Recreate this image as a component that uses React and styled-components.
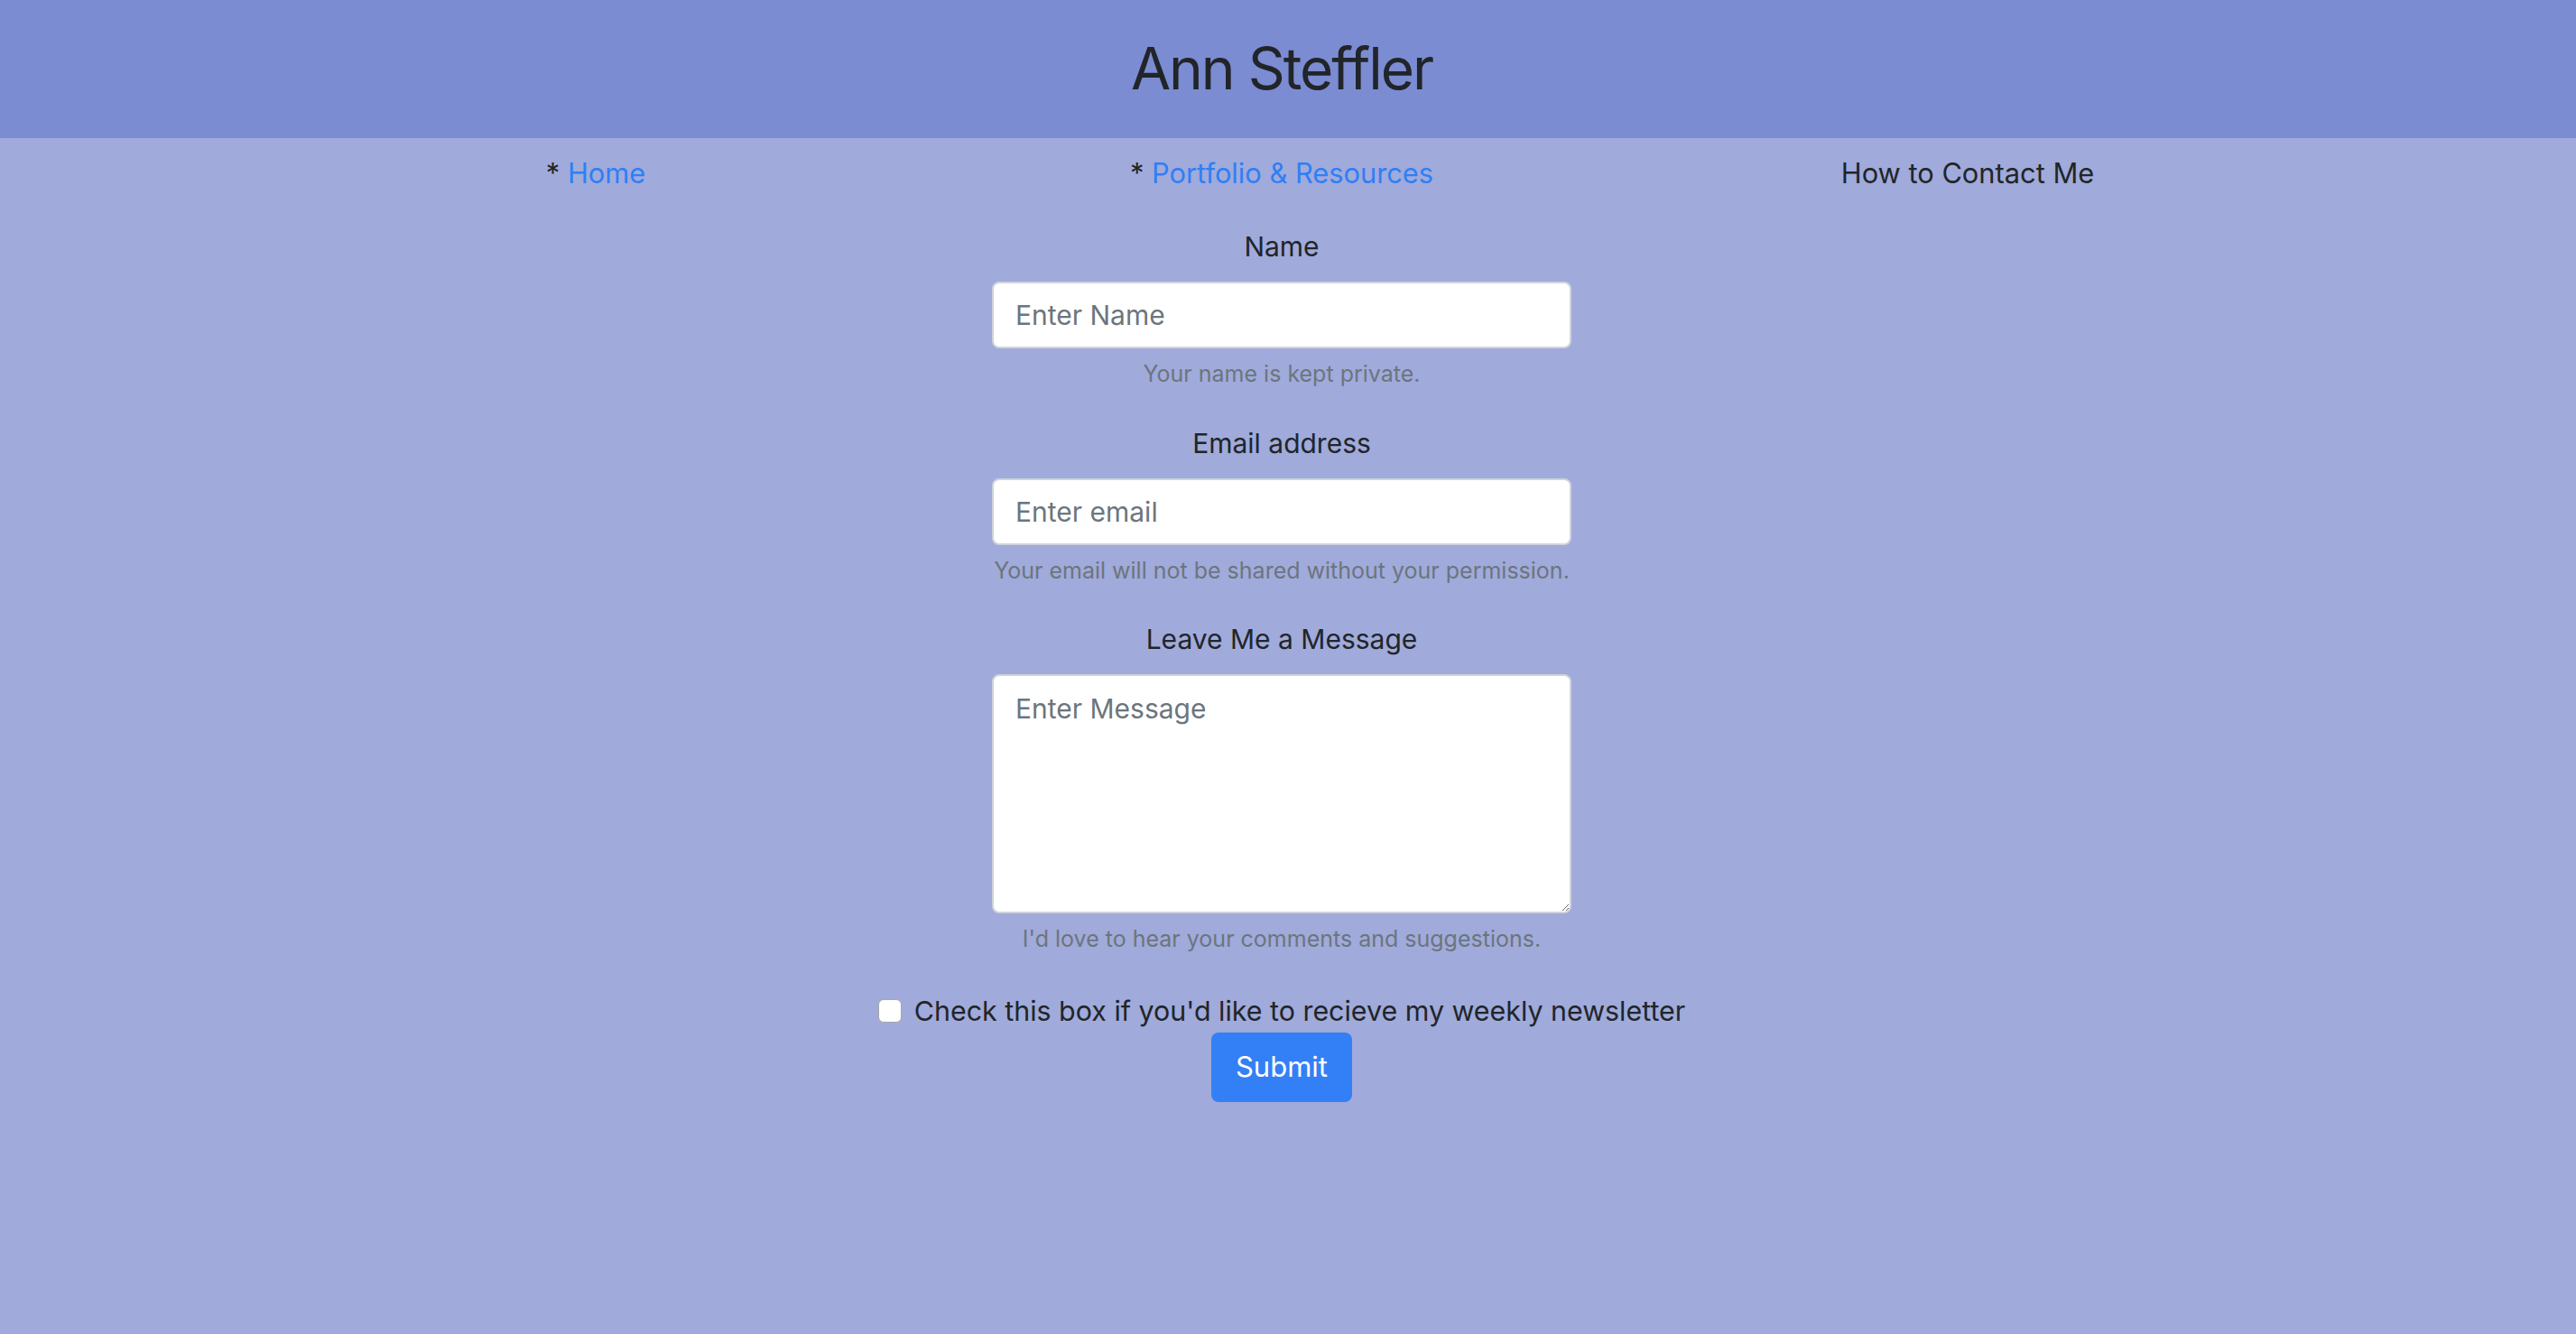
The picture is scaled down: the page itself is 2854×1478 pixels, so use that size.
import React from "react";
import styled, { createGlobalStyle } from "styled-components";

const GlobalStyle = createGlobalStyle`
  html, body {
    margin: 0;
    padding: 0;
    background: #a0aadb;
  }
  body {
    font-family: Inter, "Noto Sans", "Liberation Sans", sans-serif;
    color: #212529;
  }
  * { box-sizing: border-box; }
`;

const Page = styled.div`
  min-height: 100vh;
  background: #a0aadb;
`;

const Header = styled.header`
  height: 153px;
  background: #7b8cd2;
  display: flex;
  align-items: center;
  justify-content: center;
  padding-right: 14px;
`;

const Title = styled.h1`
  margin: 0;
  font-size: 64px;
  font-weight: 400;
  letter-spacing: -2px;
  line-height: 1.2;
  color: #212529;
`;

const Main = styled.main`
  padding: 16px 14px 0 0;
  display: flex;
  flex-direction: column;
  align-items: center;
`;

const Nav = styled.nav`
  width: 2280px;
  display: grid;
  grid-template-columns: repeat(3, 1fr);
  font-size: 30.8px;
  line-height: 1.5;
`;

const NavItem = styled.div`
  text-align: center;
  color: #212529;
`;

const NavLink = styled.a`
  color: #2f7ff5;
  text-decoration: none;
`;

const Form = styled.form`
  margin-top: 36px;
  display: flex;
  flex-direction: column;
  align-items: center;
`;

const Group = styled.div`
  width: 642px;
  display: flex;
  flex-direction: column;
  align-items: stretch;
  margin-bottom: 35px;
`;

const Label = styled.label`
  display: block;
  text-align: center;
  font-size: 30px;
  line-height: 1.5;
  margin-bottom: 16px;
  color: #212529;
`;

const fieldBase = `
  width: 100%;
  font-family: Inter, "Noto Sans", "Liberation Sans", sans-serif;
  font-size: 30px;
  color: #495057;
  background: #ffffff;
  border: 2px solid #ced4da;
  border-radius: 8px;
  outline: none;
  margin: 0;
  &::placeholder { color: #6c757d; opacity: 1; }
`;

const TextInput = styled.input`
  ${fieldBase}
  height: 74px;
  padding: 0 24px;
  line-height: 1.5;
`;

const TextArea = styled.textarea`
  ${fieldBase}
  height: 265px;
  padding: 14px 24px;
  line-height: 1.5;
  resize: vertical;
  display: block;
`;

const Help = styled.small`
  display: block;
  text-align: center;
  font-size: 25px;
  line-height: 1.5;
  color: #6c757d;
  margin-top: 10px;
  white-space: nowrap;
`;

const CheckRow = styled.label`
  display: flex;
  align-items: center;
  gap: 14px;
  font-size: 30.4px;
  line-height: 1.5;
  color: #212529;
  margin-top: 3px;
`;

const CheckBox = styled.input.attrs({ type: "checkbox" })`
  appearance: none;
  -webkit-appearance: none;
  width: 26px;
  height: 26px;
  margin: 0;
  background: #ffffff;
  border: 1px solid #a7a7a7;
  border-radius: 6px;
  flex: none;
`;

const SubmitButton = styled.button`
  font-family: Inter, "Noto Sans", "Liberation Sans", sans-serif;
  font-size: 31px;
  line-height: 1.5;
  color: #ffffff;
  background: #3380f6;
  border: none;
  border-radius: 8px;
  padding: 15px 27px;
  margin-top: 1px;
  cursor: pointer;
`;

export default function App() {
  return (
    <Page>
      <GlobalStyle />
      <Header>
        <Title>Ann Steffler</Title>
      </Header>
      <Main>
        <Nav>
          <NavItem>
            * <NavLink href="#">Home</NavLink>
          </NavItem>
          <NavItem>
            * <NavLink href="#">Portfolio &amp; Resources</NavLink>
          </NavItem>
          <NavItem>How to Contact Me</NavItem>
        </Nav>
        <Form onSubmit={(e) => e.preventDefault()}>
          <Group>
            <Label htmlFor="name">Name</Label>
            <TextInput id="name" type="text" placeholder="Enter Name" />
            <Help>Your name is kept private.</Help>
          </Group>
          <Group>
            <Label htmlFor="email">Email address</Label>
            <TextInput id="email" type="email" placeholder="Enter email" />
            <Help>Your email will not be shared without your permission.</Help>
          </Group>
          <Group>
            <Label htmlFor="message">Leave Me a Message</Label>
            <TextArea id="message" placeholder="Enter Message" />
            <Help>I'd love to hear your comments and suggestions.</Help>
          </Group>
          <CheckRow>
            <CheckBox />
            Check this box if you'd like to recieve my weekly newsletter
          </CheckRow>
          <SubmitButton type="submit">Submit</SubmitButton>
        </Form>
      </Main>
    </Page>
  );
}
